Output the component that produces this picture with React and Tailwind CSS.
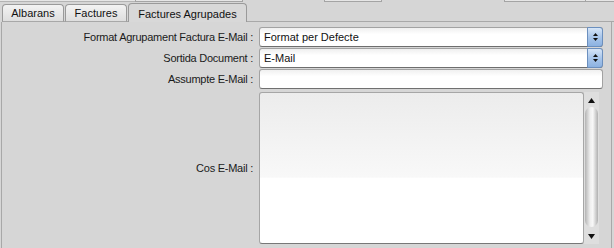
import React from "react";

const font = { fontFamily: '"Liberation Sans", Arial, sans-serif' };

const Spinner = () => (
  <div className="-my-px -mr-px flex w-[16px] flex-col items-center justify-center gap-[2px] rounded-r-[3px] border border-[#6b8fbe] bg-[linear-gradient(#d6e5f7,#a9c6ea_50%,#8cb2e1)]">
    <svg width="5" height="3" viewBox="0 0 5 3">
      <path d="M2.5 0L5 3H0z" fill="#111" />
    </svg>
    <svg width="5" height="3" viewBox="0 0 5 3">
      <path d="M0 0h5L2.5 3z" fill="#111" />
    </svg>
  </div>
);

const SelectField = ({ value }) => (
  <div className="flex h-[20px] w-[344px] rounded-[3px] border border-[#a2a2a2] border-b-[#6e6e6e] bg-[linear-gradient(#efefef,#fff_35%,#fff)]">
    <span className="flex flex-1 items-center pl-[4px] text-[11px] text-[#111]">
      {value}
    </span>
    <Spinner />
  </div>
);

const Label = ({ children }) => (
  <div className="w-[251px] text-right text-[11px] tracking-[-0.25px] text-[#1a1a1a]">
    {children}
  </div>
);

const Tab = ({ label, active, width }) =>
  active ? (
    <div
      className={`flex h-[19px] ${width} items-start justify-center rounded-t-[4px] border border-b-0 border-[#9a9a9a] bg-[#d8d8d8] pt-[2px] text-[11px] text-[#111]`}
    >
      {label}
    </div>
  ) : (
    <div
      className={`mt-[1px] flex h-[18px] ${width} items-center justify-center rounded-t-[4px] border border-[#9a9a9a] border-b-[#a8a8a8] bg-[linear-gradient(#f3f3f3,#dedede)] pt-[1px] text-[11px] text-[#111]`}
    >
      {label}
    </div>
  );

export default function App() {
  return (
    <div
      className="flex h-[248px] w-[614px] flex-col overflow-hidden bg-[#d6d6d6]"
      style={font}
    >
      {/* bottoms of the widgets above */}
      <div className="flex h-[3px]">
        <div className="h-[2px] w-[135px] border-b border-[#b4b4b4] bg-[#e6e6e6]" />
        <div className="h-[2px] w-[107px] border-b border-l border-[#a4a4a4] bg-[#e6e6e6]" />
        <div className="h-[2px] w-[82px] border-l border-[#a4a4a4]" />
        <div className="h-[2px] w-[58px] border-x border-b border-[#a4a4a4] bg-[#e6e6e6]" />
        <div className="h-[2px] w-[122px]" />
        <div className="h-[2px] w-[82px] border-x border-b border-[#a4a4a4] bg-[#e6e6e6]" />
        <div className="h-[2px] flex-1 border-b border-[#a4a4a4] bg-[#e6e6e6]" />
      </div>

      {/* tabs */}
      <div className="flex h-[19px] items-start pl-[2px]">
        <Tab label="Albarans" width="w-[62px]" />
        <div className="mt-[18px] h-px w-[1px] bg-[#a8a8a8]" />
        <Tab label="Factures" width="w-[62px]" />
        <div className="mt-[18px] h-px w-[1px] bg-[#a8a8a8]" />
        <Tab label="Factures Agrupades" active width="w-[119px]" />
        <div className="mt-[18px] h-px flex-1 bg-[#a8a8a8]" />
      </div>

      {/* panel */}
      <div className="ml-[1px] flex w-[611px] flex-1 flex-col gap-[1px] border-x border-[#a8a8a8] pt-[5px]">
        <div className="flex h-[20px] items-center">
          <Label>Format Agrupament Factura E-Mail :</Label>
          <div className="ml-[6px]">
            <SelectField value="Format per Defecte" />
          </div>
        </div>
        <div className="flex h-[20px] items-center">
          <Label>Sortida Document :</Label>
          <div className="ml-[6px]">
            <SelectField value="E-Mail" />
          </div>
        </div>
        <div className="flex h-[20px] items-center">
          <Label>Assumpte E-Mail :</Label>
          <div className="ml-[6px] h-[20px] w-[344px] rounded-[3px] border border-[#a2a2a2] border-b-[#707070] bg-[linear-gradient(#f0f0f0,#fff_35%,#fff)]" />
        </div>
        <div className="mt-[2px] flex h-[152px] items-center">
          <Label>Cos E-Mail :</Label>
          <div className="ml-[6px] flex h-full">
            <div className="h-full w-[325px] rounded-[3px] border border-[#a6a6a6] border-b-[#787878] bg-[linear-gradient(#ececec,#f8f8f8_56%,#fff_57%,#fff)]" />
            <div className="flex h-full w-[15px] flex-col items-center bg-[#dedede] pt-[3px] pb-[3px]">
              <div className="flex h-[10px] items-center">
                <svg width="7" height="5" viewBox="0 0 7 5">
                  <path d="M3.5 0L7 5H0z" fill="#111" />
                </svg>
              </div>
              <div className="mt-[2px] w-[13px] flex-1 rounded-full bg-[linear-gradient(90deg,#b4b4b4,#efefef_40%,#f8f8f8_60%,#b0b0b0)]" />
              <div className="mt-[4px] flex h-[10px] items-center">
                <svg width="7" height="5" viewBox="0 0 7 5">
                  <path d="M0 0h7L3.5 5z" fill="#111" />
                </svg>
              </div>
            </div>
          </div>
        </div>
      </div>
    </div>
  );
}
